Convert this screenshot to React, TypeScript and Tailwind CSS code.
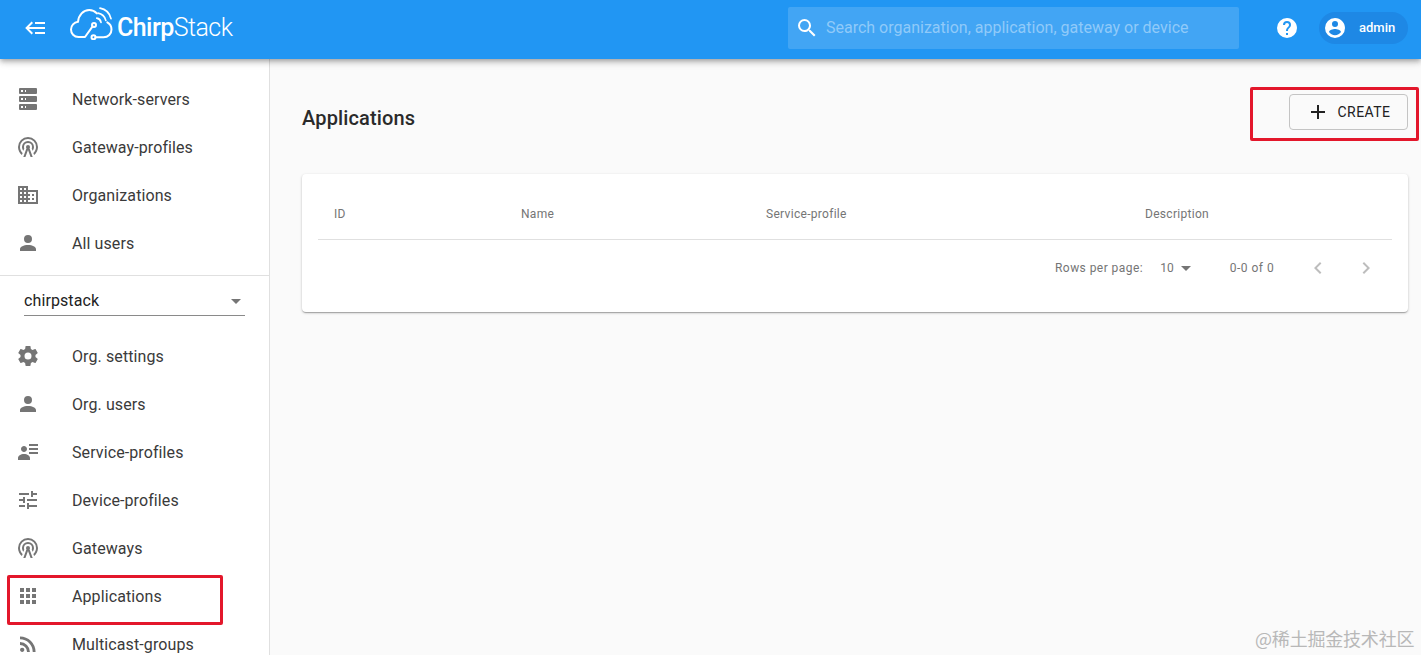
import React from 'react';

const paths = {
  server: 'M4,1H20A1,1 0 0,1 21,2V6A1,1 0 0,1 20,7H4A1,1 0 0,1 3,6V2A1,1 0 0,1 4,1M4,9H20A1,1 0 0,1 21,10V14A1,1 0 0,1 20,15H4A1,1 0 0,1 3,14V10A1,1 0 0,1 4,9M4,17H20A1,1 0 0,1 21,18V22A1,1 0 0,1 20,23H4A1,1 0 0,1 3,22V18A1,1 0 0,1 4,17M9,5H10V3H9V5M9,13H10V11H9V13M9,21H10V19H9V21M5,3V5H7V3H5M5,11V13H7V11H5M5,19V21H7V19H5Z',
  tower: 'M12,10A2,2 0 0,1 14,12C14,12.5 13.82,12.94 13.53,13.29L16.7,22H14.57L12,14.93L9.43,22H7.3L10.47,13.29C10.18,12.94 10,12.5 10,12A2,2 0 0,1 12,10M12,8A4,4 0 0,0 8,12C8,12.5 8.1,13 8.28,13.46L7.4,15.86C6.53,14.81 6,13.47 6,12A6,6 0 0,1 12,6A6,6 0 0,1 18,12C18,13.47 17.47,14.81 16.6,15.86L15.72,13.46C15.9,13 16,12.5 16,12A4,4 0 0,0 12,8M12,4A8,8 0 0,0 4,12C4,14.36 5,16.5 6.64,17.94L5.92,19.94C3.54,18.11 2,15.23 2,12A10,10 0 0,1 12,2A10,10 0 0,1 22,12C22,15.23 20.46,18.11 18.08,19.94L17.36,17.94C19,16.5 20,14.36 20,12A8,8 0 0,0 12,4Z',
  domain: 'M18,15H16V17H18M18,11H16V13H18M20,19H12V17H14V15H12V13H14V11H12V9H20M10,7H8V5H10M10,11H8V9H10M10,15H8V13H10M10,19H8V17H10M6,7H4V5H6M6,11H4V9H6M6,15H4V13H6M6,19H4V17H6M12,7V3H2V21H22V7H12Z',
  account: 'M12,4A4,4 0 0,1 16,8A4,4 0 0,1 12,12A4,4 0 0,1 8,8A4,4 0 0,1 12,4M12,14C16.42,14 20,15.79 20,18V20H4V18C4,15.79 7.58,14 12,14Z',
  settings: 'M12,15.5A3.5,3.5 0 0,1 8.5,12A3.5,3.5 0 0,1 12,8.5A3.5,3.5 0 0,1 15.5,12A3.5,3.5 0 0,1 12,15.5M19.43,12.97C19.47,12.65 19.5,12.33 19.5,12C19.5,11.67 19.47,11.34 19.43,11L21.54,9.37C21.73,9.22 21.78,8.95 21.66,8.73L19.66,5.27C19.54,5.05 19.27,4.96 19.05,5.05L16.56,6.05C16.04,5.66 15.5,5.32 14.87,5.07L14.5,2.42C14.46,2.18 14.25,2 14,2H10C9.75,2 9.54,2.18 9.5,2.42L9.13,5.07C8.5,5.32 7.96,5.66 7.44,6.05L4.95,5.05C4.73,4.96 4.46,5.05 4.34,5.27L2.34,8.73C2.21,8.95 2.27,9.22 2.46,9.37L4.57,11C4.53,11.34 4.5,11.67 4.5,12C4.5,12.33 4.53,12.65 4.57,12.97L2.46,14.63C2.27,14.78 2.21,15.05 2.34,15.27L4.34,18.73C4.46,18.95 4.73,19.03 4.95,18.95L7.44,17.94C7.96,18.34 8.5,18.68 9.13,18.93L9.5,21.58C9.54,21.82 9.75,22 10,22H14C14.25,22 14.46,21.82 14.5,21.58L14.87,18.93C15.5,18.67 16.04,18.34 16.56,17.94L19.05,18.95C19.27,19.03 19.54,18.95 19.66,18.73L21.66,15.27C21.78,15.05 21.73,14.78 21.54,14.63L19.43,12.97Z',
  details: 'M11 9C11 10.66 9.66 12 8 12C6.34 12 5 10.66 5 9C5 7.34 6.34 6 8 6C9.66 6 11 7.34 11 9M14 20H2V18C2 15.79 4.69 14 8 14C11.31 14 14 15.79 14 18M22 12V14H13V12M22 8V10H13V8M22 4V6H13V4Z',
  tune: 'M3,17V19H9V17H3M3,5V7H13V5H3M13,21V19H21V17H13V15H11V21H13M7,9V11H3V13H7V15H9V9H7M21,13V11H11V13H21M15,9H17V7H21V5H17V3H15V9Z',
  apps: 'M16,20H20V16H16M16,14H20V10H16M10,8H14V4H10M16,8H20V4H16M10,14H14V10H10M4,14H8V10H4M4,20H8V16H4M10,20H14V16H10M4,8H8V4H4V8Z',
  rss: 'M6.18,15.64A2.18,2.18 0 0,1 8.36,17.82C8.36,19 7.38,20 6.18,20C5,20 4,19 4,17.82A2.18,2.18 0 0,1 6.18,15.64M4,4.44A15.56,15.56 0 0,1 19.56,20H16.73A12.73,12.73 0 0,0 4,7.27V4.44M4,10.1A9.9,9.9 0 0,1 13.9,20H11.07A7.07,7.07 0 0,0 4,12.93V10.1Z',
  magnify: 'M9.5,3A6.5,6.5 0 0,1 16,9.5C16,11.11 15.41,12.59 14.44,13.73L14.71,14H15.5L20.5,19L19,20.5L14,15.5V14.71L13.73,14.44C12.59,15.41 11.11,16 9.5,16A6.5,6.5 0 0,1 3,9.5A6.5,6.5 0 0,1 9.5,3M9.5,5C7,5 5,7 5,9.5C5,12 7,14 9.5,14C12,14 14,12 14,9.5C14,7 12,5 9.5,5Z',
  help: 'M15.07,11.25L14.17,12.17C13.45,12.89 13,13.5 13,15H11V14.5C11,13.39 11.45,12.39 12.17,11.67L13.41,10.41C13.78,10.05 14,9.55 14,9C14,7.89 13.1,7 12,7A2,2 0 0,0 10,9H8A4,4 0 0,1 12,5A4,4 0 0,1 16,9C16,9.88 15.64,10.67 15.07,11.25M13,19H11V17H13M12,2A10,10 0 0,0 2,12A10,10 0 0,0 12,22A10,10 0 0,0 22,12C22,6.47 17.5,2 12,2Z',
  accountCircle: 'M12,19.2C9.5,19.2 7.29,17.92 6,16C6.03,14 10,12.9 12,12.9C14,12.9 17.97,14 18,16C16.71,17.92 14.5,19.2 12,19.2M12,5A3,3 0 0,1 15,8A3,3 0 0,1 12,11A3,3 0 0,1 9,8A3,3 0 0,1 12,5M12,2A10,10 0 0,0 2,12A10,10 0 0,0 12,22A10,10 0 0,0 22,12C22,6.47 17.5,2 12,2Z',
  plus: 'M19,13H13V19H11V13H5V11H11V5H13V11H19V13Z',
  back: 'M5,13L9,17L7.6,18.42L1.18,12L7.6,5.58L9,7L5,11H21V13H5M21,6V8H11V6H21M21,16V18H11V16H21Z',
  left: 'M15.41,16.58L10.83,12L15.41,7.41L14,6L8,12L14,18L15.41,16.58Z',
  right: 'M8.59,16.58L13.17,12L8.59,7.41L10,6L16,12L10,18L8.59,16.58Z',
  drop: 'M7,10L12,15L17,10H7Z',
};

const Icon = ({ name, className }: { name: keyof typeof paths; className?: string }) => (
  <svg viewBox="0 0 24 24" fill="currentColor" className={className}>
    <path d={paths[name]} />
  </svg>
);

const Logo = () => (
  <svg viewBox="0 0 43 33" fill="none" stroke="white" strokeWidth="2" strokeLinecap="round" strokeLinejoin="round" className="w-[43px] h-[33px]">
    <path d="M22.6 19.4L15 30H8.5C4 30 1 26.5 1 22.5C1 18.5 4 15.3 8 14.8C8.6 8.2 13.3 3 19.3 3C22.2 3 24.8 4.2 26.8 6.4" />
    <circle cx="24" cy="18" r="2" />
    <circle cx="23.5" cy="30.3" r="2" />
    <path d="M25.5 30.3H33.5C38.2 30.3 41.5 26.8 41.5 22.5C41.5 19.4 39.8 16.8 37.3 15.4" />
    <path d="M26.8 11.2C29 11.6 30.6 13.2 31 15.4" strokeWidth="1.7" />
    <path d="M28 6.2C31.8 6.9 34.8 9.7 35.8 13.4" strokeWidth="1.7" />
    <path d="M30 1.2C35.4 2.2 39.6 6.3 41 11.6" strokeWidth="1.7" />
  </svg>
);

const NavItem = ({ icon, label }: { icon: keyof typeof paths; label: string }) => (
  <div className="h-12 flex items-center pl-4 shrink-0">
    <Icon name={icon} className="w-6 h-6 text-[#757575]" />
    <span className="ml-8 mt-[1px] text-[16px] leading-[22px] tracking-[0.1px] text-[#3a3a3a]">{label}</span>
  </div>
);

const topNav: [keyof typeof paths, string][] = [
  ['server', 'Network-servers'],
  ['tower', 'Gateway-profiles'],
  ['domain', 'Organizations'],
  ['account', 'All users'],
];

const orgNav: [keyof typeof paths, string][] = [
  ['settings', 'Org. settings'],
  ['account', 'Org. users'],
  ['details', 'Service-profiles'],
  ['tune', 'Device-profiles'],
  ['tower', 'Gateways'],
  ['apps', 'Applications'],
  ['rss', 'Multicast-groups'],
];

export default function App() {
  return (
    <div className="relative h-screen overflow-hidden flex flex-col bg-[#fafafa] font-['Roboto',sans-serif]">
      <header className="relative z-10 h-[59px] shrink-0 bg-[#2196f3] flex items-center pb-[4px] shadow-[0_2px_4px_-1px_rgba(0,0,0,0.2),0_4px_5px_0_rgba(0,0,0,0.14),0_1px_10px_0_rgba(0,0,0,0.12)]">
        <Icon name="back" className="ml-6 w-6 h-6 text-white" />
        <div className="ml-[22px] mb-[8px]">
          <Logo />
        </div>
        <div className="ml-[4px] w-[115px] text-[25px] leading-none text-white tracking-[-0.55px] whitespace-nowrap">
          <span className="font-medium">Chirp</span>
          <span className="font-light">Stack</span>
        </div>
        <div className="ml-[556px] w-[451px] h-[42px] bg-white/15 rounded-[2px] flex items-center">
          <Icon name="magnify" className="ml-[7px] w-6 h-6 text-white" />
          <span className="ml-[7px] text-[16px] text-[#90caf9]">Search organization, application, gateway or device</span>
        </div>
        <Icon name="help" className="ml-[36px] w-6 h-6 text-white" />
        <div className="ml-5 w-[89px] h-8 rounded-full bg-[#1e88e5] flex items-center">
          <Icon name="accountCircle" className="ml-1 w-6 h-6 text-white" />
          <span className="ml-3 text-[13px] font-medium text-white">admin</span>
        </div>
      </header>

      <div className="flex flex-1 min-h-0">
        <aside className="w-[270px] shrink-0 bg-white border-r border-[#e0e0e0] overflow-hidden flex flex-col">
          <nav className="pt-4 pb-2">
            {topNav.map(([icon, label]) => (
              <NavItem key={label} icon={icon} label={label} />
            ))}
          </nav>
          <div className="border-t border-[#e0e0e0] h-[57px] shrink-0 px-6 pt-[8px]">
            <div className="h-[32px] border-b border-[#8a8a8a] flex items-center justify-between">
              <span className="text-[16px] mt-[2px] tracking-[0.1px] text-[#222222]">chirpstack</span>
              <Icon name="drop" className="w-6 h-6 text-[#757575] mr-[-3px] mt-[2px]" />
            </div>
          </div>
          <nav>
            {orgNav.map(([icon, label]) => (
              <NavItem key={label} icon={icon} label={label} />
            ))}
          </nav>
        </aside>

        <main className="flex-1 min-w-0 pl-8 pr-[13px]">
          <div className="h-[115px] flex justify-between">
            <h1 className="mt-[46px] text-[20px] leading-[26px] tracking-[0.15px] font-medium text-[#2a2a2a]">Applications</h1>
            <button className="mt-[35px] w-[119px] h-[36px] border border-[#c4c4c4] rounded flex items-center justify-center bg-[#fafafa] text-[#212121]">
              <Icon name="plus" className="w-6 h-6 -ml-[1px]" />
              <span className="ml-2 text-[14px] tracking-[0.45px]">CREATE</span>
            </button>
          </div>

          <section className="h-[138px] bg-white rounded px-4 pt-4 shadow-[0_1px_3px_0_rgba(0,0,0,0.2),0_1px_1px_0_rgba(0,0,0,0.14),0_2px_1px_-1px_rgba(0,0,0,0.12)]">
            <div className="h-[50px] border-b border-[#e0e0e0] grid grid-cols-[187px_245px_379px_1fr] pl-4 pb-[2px] items-center text-[12px] tracking-[0.3px] text-[#757575]">
              <span>ID</span>
              <span>Name</span>
              <span>Service-profile</span>
              <span>Description</span>
            </div>
            <div className="h-[56px] flex items-center text-[12px] text-[#757575]">
              <span className="ml-[737px] tracking-[0.45px]">Rows per page:</span>
              <span className="ml-[17px]">10</span>
              <Icon name="drop" className="w-6 h-6" />
              <span className="ml-[32px] tracking-[0.5px]">0-0 of 0</span>
              <Icon name="left" className="ml-[32px] w-6 h-6 text-[#bdbdbd]" />
              <Icon name="right" className="ml-[24px] w-6 h-6 text-[#bdbdbd]" />
            </div>
          </section>
        </main>
      </div>

      <div className="absolute left-[7px] top-[575px] w-[216px] h-[50px] border-[3px] border-[#e3172b] rounded-[2px]" />
      <div className="absolute left-[1250px] top-[87px] w-[169px] h-[54px] border-[3px] border-[#e3172b] rounded-[2px]" />
      <span className="absolute left-[1255px] top-[626px] text-[18px] leading-[24px] tracking-[-0.2px] text-[#b8b8b8] font-['Noto_Sans_CJK_SC',sans-serif]">@稀土掘金技术社区</span>
    </div>
  );
}
